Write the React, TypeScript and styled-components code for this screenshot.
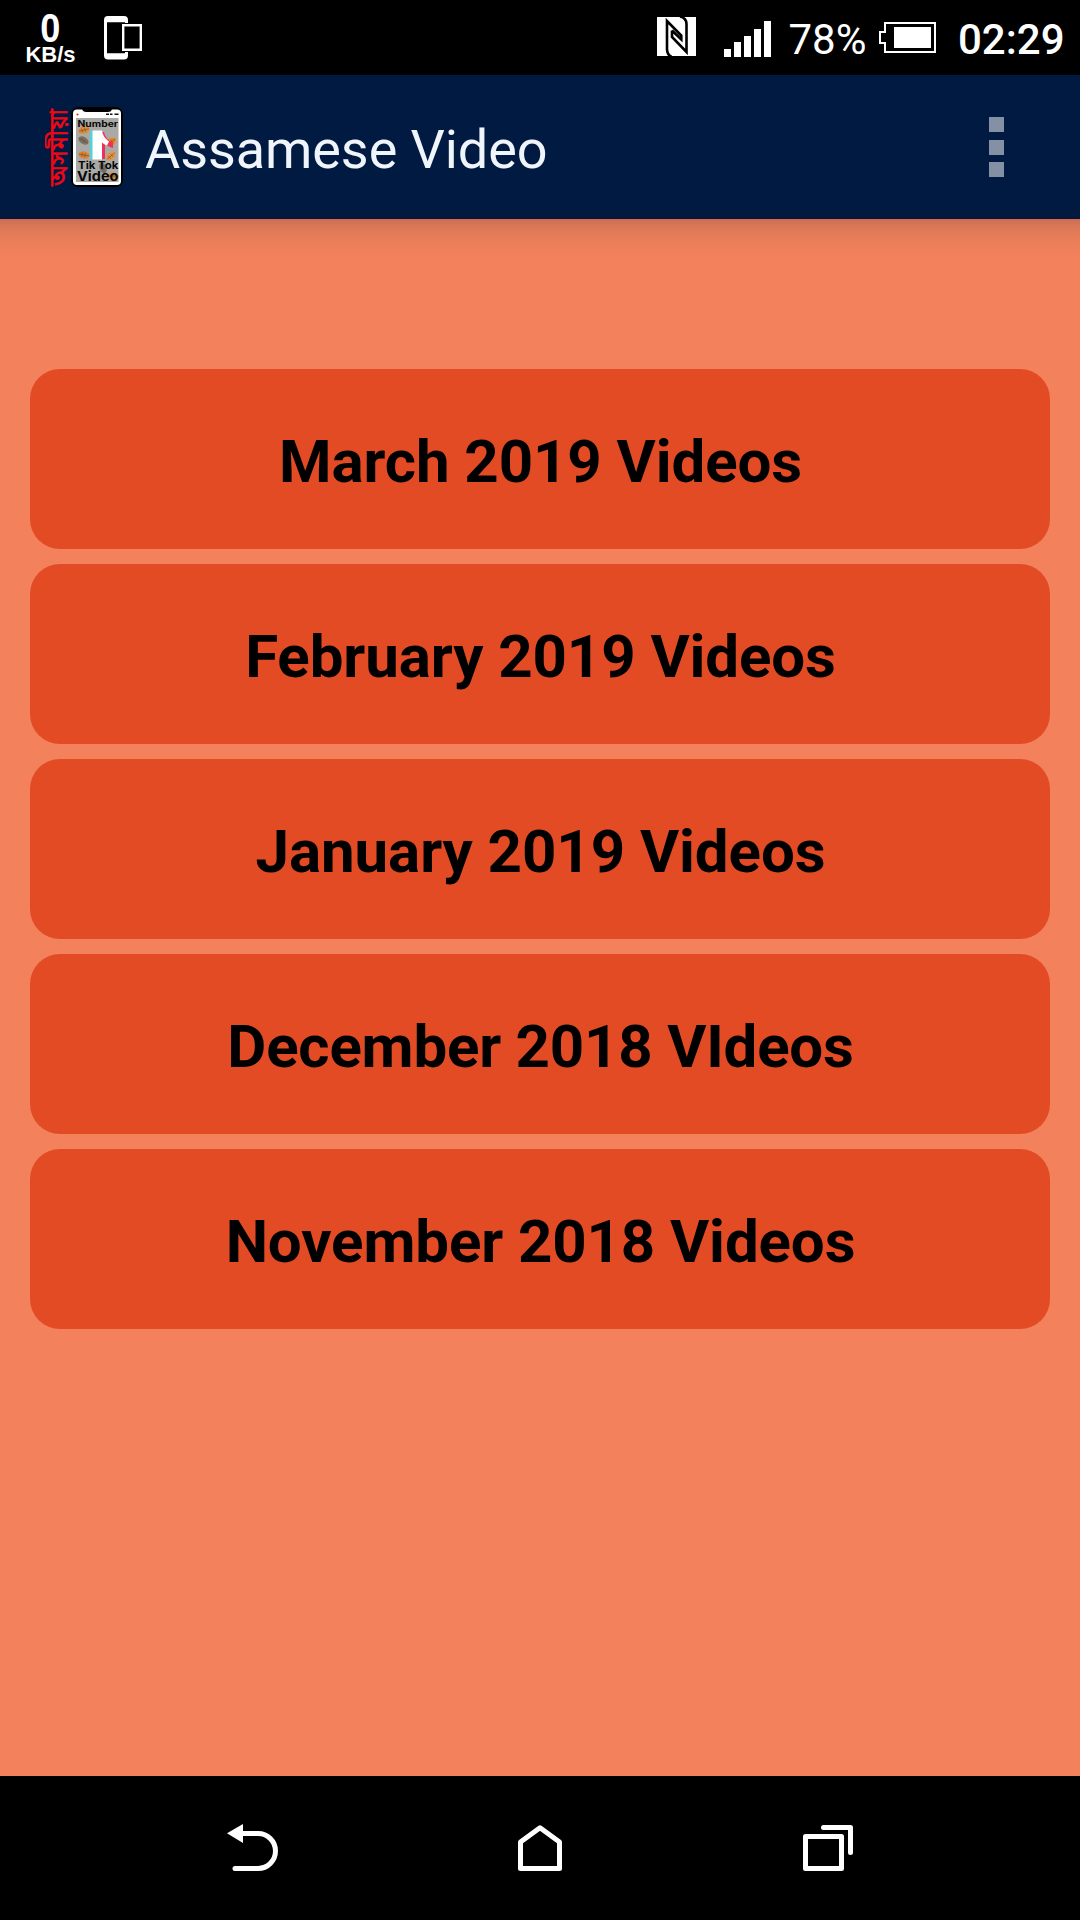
import React from "react";
import styled, { createGlobalStyle } from "styled-components";

const Global = createGlobalStyle`
  body { margin: 0; background: #f2815c; }
  *, *::before, *::after { box-sizing: border-box; }
`;

const Screen = styled.div`
  width: 1080px;
  height: 1920px;
  display: flex;
  flex-direction: column;
  background: #f2815c;
  font-family: Roboto, "Liberation Sans", sans-serif;
  overflow: hidden;
`;

const StatusBar = styled.header`
  height: 75px;
  flex: none;
  display: flex;
  align-items: flex-start;
  justify-content: space-between;
  padding: 0 16px 0 25px;
  background: #000;
  color: #fff;
`;

const StatusGroup = styled.div`
  display: flex;
  height: 75px;
`;

const NetSpeed = styled.div`
  width: 51px;
  padding-top: 10px;
  display: flex;
  flex-direction: column;
  align-items: center;
  font-family: "Liberation Sans", sans-serif;
  font-weight: 700;
`;

const SpeedValue = styled.span`
  font-size: 41px;
  line-height: 36px;
  transform: scaleX(0.88);
`;

const SpeedUnit = styled.span`
  font-size: 22px;
  line-height: 18px;
`;

const Glyph = styled.svg<{ $ml?: number }>`
  display: block;
  flex: none;
  margin-left: ${(p) => p.$ml ?? 0}px;
`;

const StatusText = styled.span<{ $weight: number; $width: number; $ml: number }>`
  width: ${(p) => p.$width}px;
  margin-left: ${(p) => p.$ml}px;
  padding-top: 2px;
  font-size: 42px;
  line-height: 75px;
  font-weight: ${(p) => p.$weight};
  text-align: right;
  white-space: nowrap;
`;

const AppBar = styled.div`
  height: 144px;
  flex: none;
  display: flex;
  align-items: center;
  padding: 0 76px 0 45px;
  background: linear-gradient(
    #001a41 136px,
    #06193a 136px,
    #06193a 138px,
    #001a41 138px,
    #001a41 142px,
    #0d1330 143px
  );
`;

const Title = styled.h1`
  margin: 6px 0 0 22px;
  flex: 1;
  font-size: 54px;
  line-height: 64px;
  font-weight: 400;
  letter-spacing: -0.08px;
  color: #f0f4fb;
`;

const Overflow = styled.button`
  display: flex;
  flex-direction: column;
  gap: 7.5px;
  padding: 0;
  border: 0;
  background: none;
`;

const Dot = styled.i`
  width: 15px;
  height: 15px;
  background: #8490a4;
`;

const List = styled.main`
  flex: 1;
  display: flex;
  flex-direction: column;
  gap: 15px;
  padding: 150px 30px 0;
  background: linear-gradient(#cb6a58 0, #d37353 3px, #dc7856 9px, #e97d59 20px, #f2815c 36px);
`;

const Card = styled.button<{ $tracking: number }>`
  height: 180px;
  flex: none;
  display: flex;
  align-items: center;
  justify-content: center;
  padding: 4px 0 0 1px;
  border: 0;
  border-radius: 30px;
  background: #e34b25;
  color: #000;
  font-family: inherit;
  font-size: 60px;
  font-weight: 700;
  letter-spacing: ${(p) => p.$tracking}px;
`;

const NavBar = styled.nav`
  height: 144px;
  flex: none;
  display: flex;
  gap: 160px;
  padding: 24px 0 0 200px;
  background: #000;
`;

const NavButton = styled.button`
  width: 120px;
  height: 100px;
  padding: 0;
  border: 0;
  background: none;

  &:last-child {
    margin-left: 20px;
  }
`;

const months = [
  { label: "March 2019 Videos", tracking: -0.08 },
  { label: "February 2019 Videos", tracking: -0.08 },
  { label: "January 2019 Videos", tracking: -0.06 },
  { label: "December 2018 VIdeos", tracking: -0.2 },
  { label: "November 2018 Videos", tracking: -0.1 },
];

const CastIcon = () => (
  <Glyph $ml={28} width="38" height="75" viewBox="104 0 38 75">
    <path fill="#fff" fillRule="evenodd" d="M108 16h16a4 4 0 0 1 4 4v35.500a4 4 0 0 1-4 4h-16a4 4 0 0 1-4-4V20a4 4 0 0 1 4-4zM107 22.300v31h18v-31z" />
    <path d="M121 23h21v29h-21z" fill="#000" />
    <path d="M123.200 25.200h17.600v24.600h-17.600z" fill="#000" stroke="#fff" strokeWidth="2.400" />
  </Glyph>
);

const NfcIcon = () => (
  <Glyph width="39" height="75" viewBox="657 0 39 75">
    <path d="M657 17h39v39h-39z" fill="#fff" />
    <path
      d="M671.500 56.500Q667 55 667 49V21L681.300 35.500V39.500L672 30.500M680 16.500Q686.500 18 686.500 24V52L672 37V30.500"
      fill="none"
      stroke="#000"
      strokeWidth="2.600"
    />
  </Glyph>
);

const SignalIcon = () => (
  <Glyph $ml={28} width="47" height="75" viewBox="724 0 47 75" fill="#fff">
    {[49, 42, 36, 29, 21].map((top, i) => (
      <rect key={top} x={724 + i * 10} y={top} width="7" height={57 - top} />
    ))}
  </Glyph>
);

const BatteryIcon = () => (
  <Glyph $ml={12.5} width="57" height="75" viewBox="879 0 57 75">
    <path d="M885 23h50v29h-50v-9h-5V32h5z" fill="none" stroke="#fff" strokeWidth="2" />
    <path d="M894 27h37v21h-37z" fill="#fff" />
  </Glyph>
);

const Leaf = ({ x, y, r, c }: { x: number; y: number; r: number; c: string }) => (
  <g transform={`translate(${x} ${y}) rotate(${r})`}>
    <ellipse rx="5.500" ry="3.600" fill={c} />
    <path d="M-5 0H5M-2-2v4M1-2v4" stroke="#6b5138" strokeWidth="0.600" />
  </g>
);

const AppLogo = () => (
  <Glyph width="78" height="84" viewBox="45 105 78 84">
    <text
      transform="translate(67 186) rotate(-90)"
      fontFamily="'Noto Sans Bengali', 'Noto Sans', sans-serif"
      fontSize="25"
      textLength="77"
      lengthAdjust="spacingAndGlyphs"
      fill="#f00814"
      stroke="#f00814"
      strokeWidth="0.500"
    >
      অসমীয়া
    </text>
    <rect x="71" y="107" width="52" height="80" rx="7" fill="#000" />
    <path d="M77 109.500h5q1.500 2.500 4 2.500h22q3 0 4-2.500h5q4 0 4 4V181q0 4-4 4H77q-4 0-4-4v-67.500q0-4 4-4z" fill="#fff" />
    <path d="M76 118h42.500v64H76z" fill="#a9a9a6" />
    <circle cx="77.500" cy="114.500" r="1.100" fill="#c33" />
    <path d="M106 114.200h3m1 0h2.500m2 0h4" stroke="#111" strokeWidth="1.500" />
    <Leaf x={84} y={130} r={-15} c="#e58a32" />
    <Leaf x={83.500} y={140.500} r={30} c="#777263" />
    <Leaf x={111} y={142} r={-35} c="#ef8226" />
    <Leaf x={84} y={155} r={10} c="#df812e" />
    <Leaf x={111} y={156} r={-40} c="#e89345" />
    <Leaf x={103} y={168} r={70} c="#77766c" />
    <Leaf x={113} y={176} r={0} c="#df9140" />
    <path d="M95 132h9q1 7 9 11v5q-5-1-8-5v16H95z" fill="#ef3159" />
    <path d="M90 131h9v28h-9z" fill="#4fd3d8" />
    <path d="M92.500 130.500h9.500q1 7 7 11l-2 4q-3-1-5-3v17h-9.500z" fill="#fff" />
    <g fontFamily="Inter, sans-serif" fontWeight="700" fill="#080808">
      <text x="77.500" y="127" fontSize="8.500" textLength="40.500" lengthAdjust="spacingAndGlyphs">Number</text>
      <text x="78" y="169" fontSize="10" textLength="40.500" lengthAdjust="spacingAndGlyphs">Tik Tok</text>
      <text x="77" y="181" fontSize="13" textLength="41.500" lengthAdjust="spacingAndGlyphs">Video</text>
    </g>
  </Glyph>
);

const NavIcon = ({ children }: { children: React.ReactNode }) => (
  <Glyph width="120" height="100" viewBox="0 0 120 100" fill="none" stroke="#fff" strokeWidth="5" strokeLinejoin="round" strokeLinecap="round">
    {children}
  </Glyph>
);

export default function App() {
  return (
    <Screen>
      <Global />
      <StatusBar>
        <StatusGroup>
          <NetSpeed>
            <SpeedValue>0</SpeedValue>
            <SpeedUnit>KB/s</SpeedUnit>
          </NetSpeed>
          <CastIcon />
        </StatusGroup>
        <StatusGroup>
          <NfcIcon />
          <SignalIcon />
          <StatusText $weight={400} $width={78} $ml={17.5}>78%</StatusText>
          <BatteryIcon />
          <StatusText $weight={500} $width={106} $ml={22}>02:29</StatusText>
        </StatusGroup>
      </StatusBar>
      <AppBar>
        <AppLogo />
        <Title>Assamese Video</Title>
        <Overflow aria-label="More options">
          <Dot />
          <Dot />
          <Dot />
        </Overflow>
      </AppBar>
      <List>
        {months.map((m) => (
          <Card key={m.label} $tracking={m.tracking}>{m.label}</Card>
        ))}
      </List>
      <NavBar>
        <NavButton aria-label="Back">
          <NavIcon>
            <path d="M35 68.500H58a17.500 17.500 0 0 0 0-35H42" />
            <path d="M27 33.300L43 24V43z" fill="#fff" stroke="none" />
          </NavIcon>
        </NavButton>
        <NavButton aria-label="Home">
          <NavIcon>
            <path d="M40.500 68.500V42L60 27.700 79.500 42V68.500z" />
          </NavIcon>
        </NavButton>
        <NavButton aria-label="Recent apps">
          <NavIcon>
            <path d="M25.500 36.500h36v32h-36zM43.500 27.500h27v25" />
          </NavIcon>
        </NavButton>
      </NavBar>
    </Screen>
  );
}
